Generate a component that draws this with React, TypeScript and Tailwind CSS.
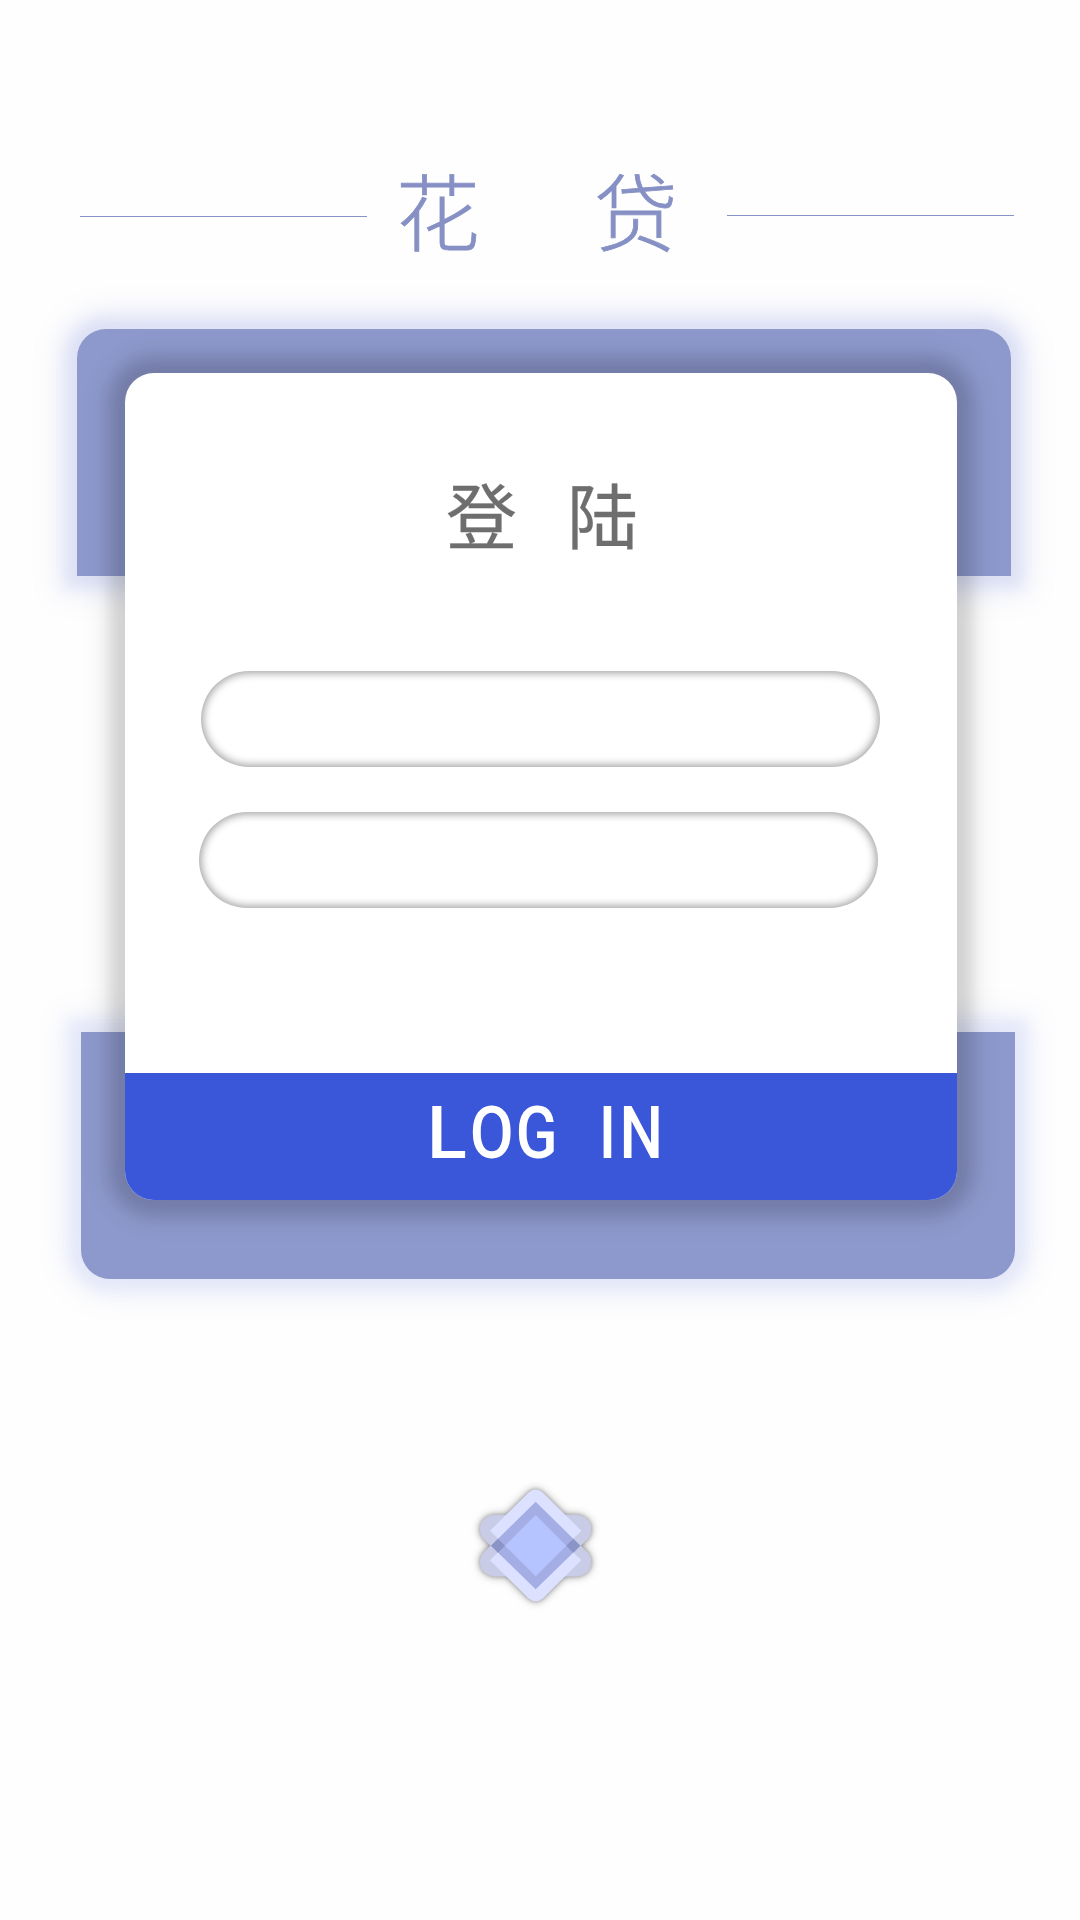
import React from "react";

function Emblem() {
  return (
    <svg
      width="150"
      height="150"
      viewBox="0 0 450 450"
      className="block overflow-visible [filter:drop-shadow(0_0_2px_rgba(0,0,0,0.25))_drop-shadow(0_0_4px_rgba(0,0,0,0.35))]"
      aria-hidden="true"
    >
      <g fill="#c9cce7" stroke="#c9cce7" strokeWidth="3">
        <path d="M150 136H104Q85 137 74 148L66 157Q56 180 68 202L93 227L68 252Q56 274 66 297L74 306Q85 317 104 318H150L227 227Z" />
        <path d="M304 136H350Q369 137 380 148L388 157Q398 180 386 202L361 227L386 252Q398 274 388 297L380 306Q369 317 350 318H304L227 227Z" />
      </g>
      <g fill="#dbe1ff">
        <path d="M90 182L205 68Q227 49 249 68L364 182L227 318Z" />
        <path d="M90 271L205 385Q227 403 249 385L364 271L227 135Z" />
      </g>
      <path d="M227 95L361 227L227 358L93 227Z" fill="#a4aee4" />
      <path d="M93 227L114 206L135 227L114 248Z" fill="#8a94c6" />
      <path d="M361 227L340 206L319 227L340 248Z" fill="#8a94c6" />
      <path d="M227 135L319 227L227 319L135 227Z" fill="#b5c4ff" />
    </svg>
  );
}

export default function App() {
  return (
    <main className="flex h-[1920px] w-[1080px] flex-col overflow-hidden bg-[#fefefe] font-['Noto_Sans_CJK_SC',sans-serif]">
      <header className="mt-[143px] flex h-[137px] items-start pl-20">
        <span className="mt-[73px] h-px w-[287px] bg-[#8892c4]" />
        <h1 className="ml-[29px] flex w-[331px] gap-[114px] text-[84px] leading-[131px] font-light text-[#8690c4] [-webkit-text-stroke:0.8px_#8690c4]">
          <span>花</span>
          <span>贷</span>
        </h1>
        <span className="mt-[72px] h-px w-[287px] bg-[#8892c4]" />
      </header>

      <section className="mt-[49px] grid h-[950px] grid-cols-1 grid-rows-1">
        <div className="col-start-1 row-start-1 flex flex-col justify-between">
          <div className="ml-[77px] h-[247px] w-[934px] rounded-t-[29px] bg-[#8d98cc] shadow-[0_0_14px_12px_rgba(120,136,220,0.13),0_0_28px_18px_rgba(120,136,220,0.15)]" />
          <div className="ml-[81px] h-[247px] w-[934px] rounded-b-[29px] bg-[#8d98cc] shadow-[0_0_14px_12px_rgba(120,136,225,0.1),0_0_28px_18px_rgba(120,136,225,0.11)]" />
        </div>

        <form
          className="z-10 col-start-1 row-start-1 mt-11 ml-[125px] flex h-[827px] w-[832px] flex-col overflow-hidden rounded-[29px] bg-white shadow-[0_0_14px_15px_rgba(0,0,0,0.1),0_0_28px_19px_rgba(0,0,0,0.09)]"
          onSubmit={(e) => e.preventDefault()}
        >
          <h2 className="mt-[89px] ml-[321px] flex gap-[50px] text-[71px] leading-[100px] text-[#6e6e6e] [-webkit-text-stroke:0.3px_#6e6e6e]">
            <span>登</span>
            <span>陆</span>
          </h2>
          <input
            aria-label="账号"
            className="mt-[109px] ml-[76px] h-24 w-[679px] shrink-0 rounded-full px-12 text-4xl outline-none shadow-[inset_0_0_9px_2px_rgba(0,0,0,0.38)]"
          />
          <input
            type="password"
            aria-label="密码"
            className="mt-[45px] ml-[74px] h-24 w-[679px] shrink-0 rounded-full px-12 text-4xl outline-none shadow-[inset_0_0_9px_2px_rgba(0,0,0,0.38)]"
          />
          <button className="mt-auto flex h-[127px] w-full shrink-0 items-center bg-[#3a57da] pb-2 pl-[302px] text-white">
            <span className="flex origin-left scale-x-[0.84] font-[Roboto] text-[73px] leading-[100px] font-medium tracking-[4px] whitespace-pre [word-spacing:23px]">
              <span className="mr-[12px] origin-left scale-x-[1.2] tracking-normal">L</span>
              <span className="mr-[4px] origin-left scale-x-[1.04] tracking-normal">O</span>
              <span>G IN</span>
            </span>
          </button>
        </form>
      </section>

      <footer className="mt-[191px] ml-[460px]">
        <Emblem />
      </footer>
    </main>
  );
}
